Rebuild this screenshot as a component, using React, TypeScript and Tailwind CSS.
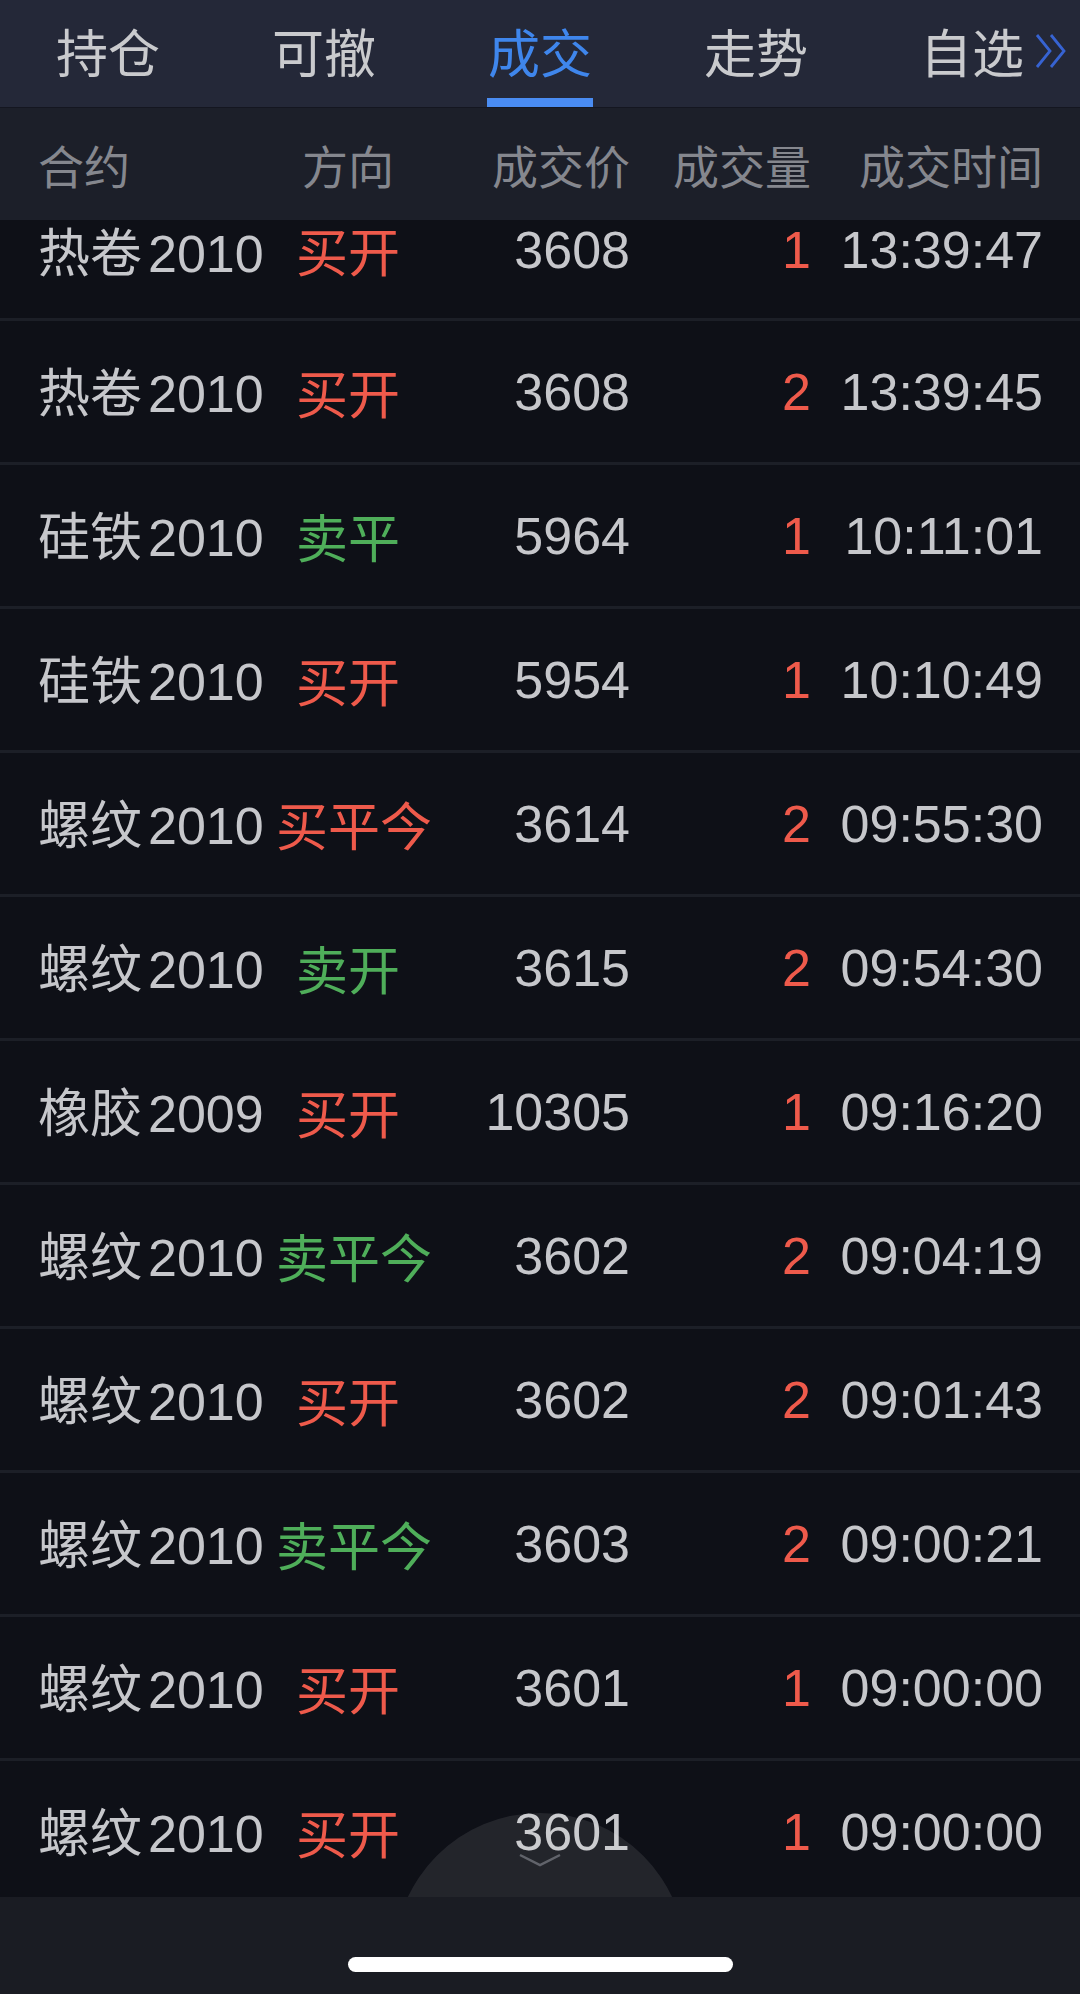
import React from "react";

type Side = "buy" | "sell";

interface Trade {
  name: string;
  code: string;
  dir: string;
  side: Side;
  price: string;
  qty: string;
  time: string;
}

const TABS = ["持仓", "可撤", "成交", "走势", "自选"];

const TRADES: Trade[] = [
  { name: "热卷", code: "2010", dir: "买开", side: "buy", price: "3608", qty: "1", time: "13:39:47" },
  { name: "热卷", code: "2010", dir: "买开", side: "buy", price: "3608", qty: "2", time: "13:39:45" },
  { name: "硅铁", code: "2010", dir: "卖平", side: "sell", price: "5964", qty: "1", time: "10:11:01" },
  { name: "硅铁", code: "2010", dir: "买开", side: "buy", price: "5954", qty: "1", time: "10:10:49" },
  { name: "螺纹", code: "2010", dir: "买平今", side: "buy", price: "3614", qty: "2", time: "09:55:30" },
  { name: "螺纹", code: "2010", dir: "卖开", side: "sell", price: "3615", qty: "2", time: "09:54:30" },
  { name: "橡胶", code: "2009", dir: "买开", side: "buy", price: "10305", qty: "1", time: "09:16:20" },
  { name: "螺纹", code: "2010", dir: "卖平今", side: "sell", price: "3602", qty: "2", time: "09:04:19" },
  { name: "螺纹", code: "2010", dir: "买开", side: "buy", price: "3602", qty: "2", time: "09:01:43" },
  { name: "螺纹", code: "2010", dir: "卖平今", side: "sell", price: "3603", qty: "2", time: "09:00:21" },
  { name: "螺纹", code: "2010", dir: "买开", side: "buy", price: "3601", qty: "1", time: "09:00:00" },
  { name: "螺纹", code: "2010", dir: "买开", side: "buy", price: "3601", qty: "1", time: "09:00:00" },
];

const FONT = "font-['Liberation_Sans','Noto_Sans_CJK_SC',sans-serif]";
const CJK = "font-['Noto_Sans_CJK_SC',sans-serif]";
const COLS = "grid grid-cols-[238px_144px_210px_181px_232px] pl-[38px] pr-[37px]";

function DoubleChevron() {
  return (
    <svg width="34" height="36" viewBox="0 0 34 36" fill="none">
      <path d="M3 2 L16 18 L3 34" stroke="#3763d2" strokeWidth="2.8" />
      <path d="M17 2 L30 18 L17 34" stroke="#3763d2" strokeWidth="2.8" />
    </svg>
  );
}

export default function App() {
  return (
    <div className={`w-[1080px] h-[1994px] bg-[#0e1017] flex flex-col overflow-hidden ${FONT}`}>
      {/* Tabs */}
      <div className="h-[108px] shrink-0 bg-[#242838] grid grid-cols-5 border-b border-[#141620]">
        {TABS.map((t, i) => (
          <div key={t} className="relative flex items-center justify-center">
            <span
              className={`text-[52px] leading-none -mt-[6px] ${CJK} ${
                i === 2 ? "text-[#3f86ec]" : "text-[#c9cacd]"
              }`}
            >
              {t}
            </span>
            {i === 2 && (
              <div className="absolute bottom-0 left-1/2 -translate-x-1/2 w-[106px] h-[9px] bg-[#4a8cf2]" />
            )}
            {i === 4 && (
              <div className="absolute right-[12px] top-[33px]">
                <DoubleChevron />
              </div>
            )}
          </div>
        ))}
      </div>

      {/* Column header */}
      <div className={`${COLS} items-center h-[112px] shrink-0 bg-[#1c1f29] text-[46px] text-[#85878e] leading-none ${CJK}`}>
        <span>合约</span>
        <span className="text-center">方向</span>
        <span className="text-right">成交价</span>
        <span className="text-right">成交量</span>
        <span className="text-right">成交时间</span>
      </div>

      {/* Trades list (first row is partly scrolled under the header) */}
      <div className="relative flex-1 overflow-hidden">
        {TRADES.map((r, i) => (
          <div
            key={i}
            className={`${COLS} text-[52px] leading-none text-[#c6c7cb] ${
              i === 0 ? "h-[98px] items-start pt-[4px]" : "h-[144px] items-center border-t-[3px] border-[#1c1f27]"
            }`}
          >
            <span className="whitespace-nowrap">
              <span className={CJK}>{r.name}</span>
              <span className="ml-[6px]">{r.code}</span>
            </span>
            <span
              className={`text-center whitespace-nowrap ${CJK} ${
                r.side === "buy" ? "text-[#ee5a4b]" : "text-[#4fae5a]"
              }`}
            >
              {r.dir}
            </span>
            <span className="text-right">{r.price}</span>
            <span className="text-right text-[#ee5a4b]">{r.qty}</span>
            <span className="text-right">{r.time}</span>
          </div>
        ))}

        {/* pull-down handle */}
        <div className="absolute left-1/2 -translate-x-1/2 -bottom-[208px] w-[292px] h-[292px] rounded-full bg-white/[0.09] flex justify-center pt-[40px]">
          <svg width="46" height="14" viewBox="0 0 46 14" fill="none">
            <path d="M3 2 L23 12 L43 2" stroke="#8b8e96" strokeOpacity="0.6" strokeWidth="2.5" />
          </svg>
        </div>
      </div>

      {/* Home bar */}
      <div className="h-[97px] shrink-0 bg-[#1a1c23] flex justify-center pt-[60px] relative z-10">
        <div className="w-[385px] h-[15px] rounded-full bg-white" />
      </div>
    </div>
  );
}
